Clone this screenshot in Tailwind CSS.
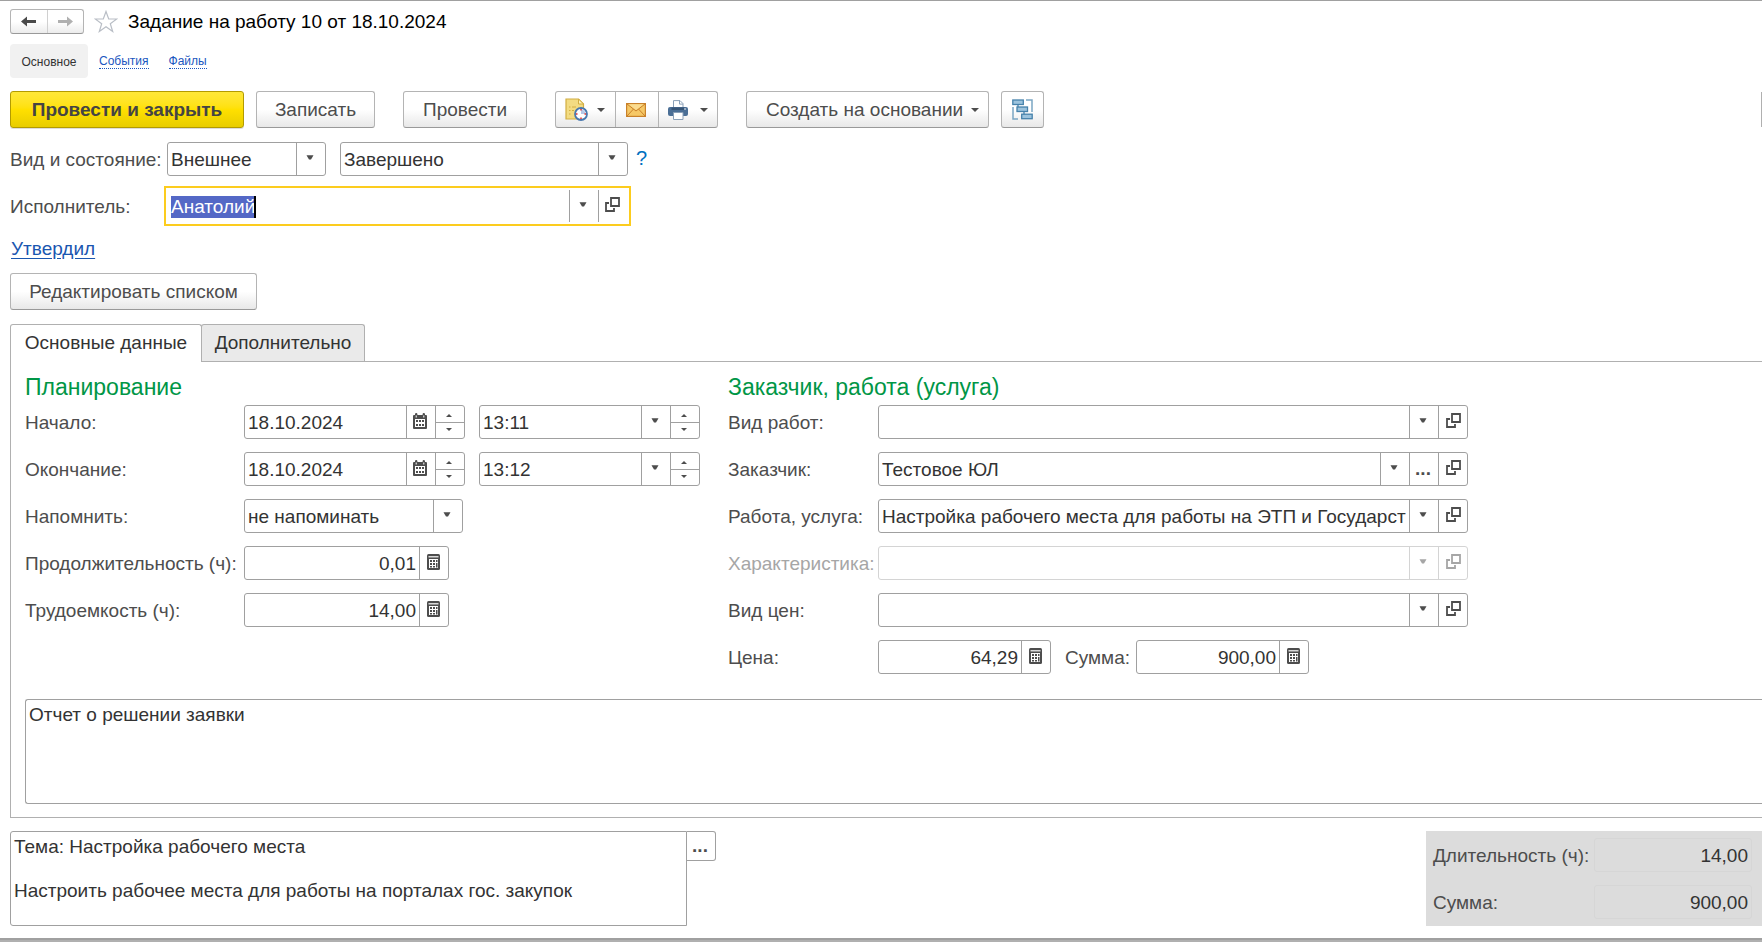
<!DOCTYPE html>
<html lang="ru">
<head>
<meta charset="utf-8">
<meta name="viewport" content="width=device-width, initial-scale=1">
<title>Задание на работу 10 от 18.10.2024</title>
<script src="https://cdn.jsdelivr.net/npm/@tailwindcss/browser@4"></script>
</head>
<body class="bg-white font-['Liberation_Sans',Arial,sans-serif] text-[19px] leading-[22px] text-[#4d4d4d] overflow-x-hidden">

<svg class="hidden" aria-hidden="true">
  <symbol id="i-down" viewBox="0 0 8 5"><path d="M0.500 0.300h7L5 4.600H3z" fill="currentColor"/></symbol>
  <symbol id="i-menu" viewBox="0 0 8 4"><path d="M0 0h8L4 4z" fill="currentColor"/></symbol>
  <symbol id="i-open" viewBox="0 0 15 15"><path d="M6 1h8v8H6z" fill="none" stroke="currentColor" stroke-width="1.800"/><path d="M4 6H1v8h8v-3" fill="none" stroke="currentColor" stroke-width="1.800"/></symbol>
  <symbol id="i-cal" viewBox="0 0 14 16"><path fill="currentColor" fill-rule="evenodd" d="M1 2h1V1.200a1 1 0 0 1 2.400 0V2h5.200V1.200a1 1 0 0 1 2.400 0V2h1a1 1 0 0 1 1 1v12a1 1 0 0 1-1 1H1a1 1 0 0 1-1-1V3a1 1 0 0 1 1-1zM2 6v8h10V6z"/><path fill="currentColor" d="M3 7h2v2H3zM6 7h2v2H6zM9 7h2v2H9zM3 11h2v2H3zM6 11h2v2H6zM9 11h2v2H9z"/><path fill="#fff" d="M2.700 2.500h1v2h-1zM10.300 2.500h1v2h-1z"/></symbol>
  <symbol id="i-calc" viewBox="0 0 13 16"><rect width="13" height="16" rx="1.500" fill="currentColor"/><path fill="#d8d8d8" d="M1.500 2h10v1.500h-10z"/><path fill="#fff" d="M2 5h9v9H2z"/><path fill="currentColor" d="M3 6h2v2H3zM6 6h2v2H6zM9 6h1.500v2H9zM3 9h2v2H3zM6 9h2v2H6zM3 12h2v1.500H3zM6 12h2v1.500H6zM9 9h1.500v4.500H9z"/></symbol>
</svg>

<main class="border-t border-[#a0a0a0] pt-2">
  <header class="flex h-[25px] items-center pl-[10px]">
    <div class="flex h-[25px] w-[74px] rounded-[3px] border border-[#b4b4b4] border-b-[#999] bg-linear-to-b from-white from-50% to-[#ececec]">
      <button class="flex flex-1 items-center justify-center border-r border-[#d0d0d0]" aria-label="Назад"><svg class="h-[11px] w-[15px] text-[#4a4a4a]" viewBox="0 0 15 11"><path d="M0 5.500 6 0.500v3.600h9v2.800H6v3.600z" fill="currentColor"/></svg></button>
      <button class="flex flex-1 items-center justify-center" aria-label="Вперед"><svg class="h-[11px] w-[15px] text-[#b0b0b0]" viewBox="0 0 15 11"><path d="M15 5.500 9 0.500v3.600H0v2.800h9v3.600z" fill="currentColor"/></svg></button>
    </div>
    <button class="ml-[10px]" aria-label="В избранное"><svg class="h-[23px] w-[24px]" viewBox="0 0 24 23"><path d="M12 1.500 14.700 9H22.800L16.300 13.700 18.700 21.500 12 16.800 5.300 21.500 7.700 13.700 1.200 9H9.300z" fill="#fff" stroke="#b9bec6" stroke-width="1.200"/></svg></button>
    <h1 class="ml-[10px] text-[19px] text-black">Задание на работу 10 от 18.10.2024</h1>
  </header>

  <nav class="mt-[10px] flex h-[34px] items-center gap-5 pl-[10px] text-[12px]">
    <span class="flex h-full w-[78px] items-center justify-center rounded-[4px] bg-[#f1f1f1] pt-px text-[#333]">Основное</span>
    <a href="#events" class="-ml-[9px] mt-px border-b border-dotted border-[#1a56c0] leading-[13px] text-[#1a56c0]">События</a>
    <a href="#files" class="mt-px border-b border-dotted border-[#1a56c0] leading-[13px] text-[#1a56c0]">Файлы</a>
  </nav>

  <div class="mt-[13px] flex h-[37px] items-stretch justify-between pl-[10px]">
    <div class="flex">
      <button class="w-[234px] rounded-[3px] border border-[#b39b00] bg-linear-to-b from-[#ffe838] via-[#ffe000] to-[#e8cd00] font-bold text-[#444] shadow-[0_1px_0_#ddd]">Провести и закрыть</button>
      <button class="ml-3 w-[119px] rounded-[3px] border border-[#b4b4b4] border-b-[#999] bg-linear-to-b from-white from-50% to-[#e8e8e8]">Записать</button>
      <button class="ml-7 w-[124px] rounded-[3px] border border-[#b4b4b4] border-b-[#999] bg-linear-to-b from-white from-50% to-[#e8e8e8]">Провести</button>
      <div class="ml-7 flex rounded-[3px] border border-[#b4b4b4] border-b-[#999] bg-linear-to-b from-white from-50% to-[#e8e8e8]">
        <button class="flex w-[60px] items-center gap-[9px] border-r border-[#b4b4b4] pl-[9px]" aria-label="Отложенные действия">
          <svg class="h-[23px] w-[23px]" viewBox="0 0 23 23"><path d="M1 1h12.500l5 5V21H1z" fill="#f3dc82" stroke="#d2ae42" stroke-width="1.200"/><path d="M13.500 1v5h5z" fill="#fff3b8" stroke="#d2ae42"/><path d="M4 9h1.500M7 9h4M4 12.500h1.500M7 12.500h2M4 16h1.500" stroke="#d2ae42"/><circle cx="16" cy="16" r="6" fill="#fff" stroke="#4878ae" stroke-width="1.800"/><path d="M16 16V11.500A4.500 4.500 0 0 1 20.500 16z" fill="#b5c8e8"/><path d="M16 11v1.500M16 19.500V21M11 16h1.500M19.500 16H21" stroke="#e03030" stroke-width="1.500"/></svg>
          <svg class="h-1 w-2"><use href="#i-menu"/></svg>
        </button>
        <button class="flex w-[43px] items-center justify-center border-r border-[#b4b4b4] pr-[2px]" aria-label="Отправить по почте">
          <svg class="h-[14px] w-[20px]" viewBox="0 0 20 14"><rect x=".6" y=".6" width="18.800" height="12.800" fill="#f6c866" stroke="#c9812a" stroke-width="1.200"/><path d="M1 1l9 7 9-7M1 13l6.500-7M19 13l-6.500-7" fill="none" stroke="#c9812a"/><path d="M2.500 1.200h15L10 7z" fill="#fbdc90"/></svg>
        </button>
        <button class="flex w-[58px] items-center gap-3 pl-[9px]" aria-label="Печать">
          <svg class="h-[20px] w-[20px]" viewBox="0 0 20 20"><path d="M5.500 8V.6H12L15 3.600V8" fill="#fff" stroke="#8aa0b8"/><path d="M11.500.6v3.500H15" fill="none" stroke="#8aa0b8"/><rect y="7" width="20" height="9" rx="2" fill="#4b6f96"/><path d="M3.500 7.500h13V10h-13z" fill="#365576"/><circle cx="17" cy="9" r=".8" fill="#fff"/><path d="M5.500 12.500h9.500v7H5.500z" fill="#fff" stroke="#8aa0b8"/></svg>
          <svg class="h-1 w-2"><use href="#i-menu"/></svg>
        </button>
      </div>
      <button class="ml-7 flex w-[243px] items-center gap-2 rounded-[3px] border border-[#b4b4b4] border-b-[#999] bg-linear-to-b from-white from-50% to-[#e8e8e8] pl-[19px] whitespace-nowrap">Создать на основании<svg class="h-1 w-2"><use href="#i-menu"/></svg></button>
      <button class="ml-3 flex w-[43px] items-center justify-center rounded-[3px] border border-[#b4b4b4] border-b-[#999] bg-linear-to-b from-white from-50% to-[#e8e8e8]" aria-label="Связанные документы">
        <svg class="h-[21px] w-[21px]" viewBox="0 0 21 21" fill="#9cc3dd" stroke="#4682ab" stroke-width="1.300"><path d="M14 1h6v12M1 8v12h5" fill="none" stroke="#7ba6c4" stroke-width="1.500"/><path d="M6 5v5h2M12 13v5" fill="none"/><rect x=".8" y="1" width="10.500" height="4.500"/><rect x="5" y="8" width="10.500" height="4.500"/><rect x="9.700" y="15.200" width="10.500" height="4.500"/></svg>
      </button>
    </div>
    <button class="my-px w-px bg-[#b0b0b0]" aria-label="Еще"></button>
  </div>

  <div class="mt-[14px] flex items-center pl-[10px]">
    <label for="kind" class="w-[157px] pt-[2px] whitespace-nowrap">Вид и состояние:</label>
    <div class="grid h-[34px] w-[159px] grid-cols-[1fr_29px] rounded-[3px] border border-[#a0a0a0]">
      <select id="kind" class="col-span-2 col-start-1 row-start-1 appearance-none px-[3px] pt-px text-[#333] outline-none"><option>Внешнее</option></select>
      <span class="pointer-events-none col-start-2 row-start-1 flex items-center justify-center border-l border-[#a0a0a0] pr-[2px] pb-[3px]"><svg class="h-[5px] w-2"><use href="#i-down"/></svg></span>
    </div>
    <div class="ml-[14px] grid h-[34px] w-[288px] grid-cols-[1fr_29px] rounded-[3px] border border-[#a0a0a0]">
      <select aria-label="Состояние" class="col-span-2 col-start-1 row-start-1 appearance-none px-[3px] pt-px text-[#333] outline-none"><option>Завершено</option></select>
      <span class="pointer-events-none col-start-2 row-start-1 flex items-center justify-center border-l border-[#a0a0a0] pr-[2px] pb-[3px]"><svg class="h-[5px] w-2"><use href="#i-down"/></svg></span>
    </div>
    <button class="ml-2 pb-[2px] text-[20px] text-[#0070c0]" aria-label="Справка">?</button>
  </div>

  <div class="mt-[10px] flex items-center pl-[10px]">
    <label for="executor" class="w-[154px] pt-[2px]">Исполнитель:</label>
    <div class="relative flex h-10 w-[467px] border-2 border-[#fccc1e] py-[2px]">
      <input id="executor" value="Анатолий" class="min-w-0 flex-1 px-[5px] pt-px text-[#333] outline-none selection:bg-[#5468c6] selection:text-white">
      <span class="absolute top-[8px] left-[88px] h-[22px] w-[2px] bg-black"></span>
      <button class="flex w-[29px] items-center justify-center border-l border-[#a0a0a0] pr-[2px] pb-[3px]" aria-label="Выбрать"><svg class="h-[5px] w-2"><use href="#i-down"/></svg></button>
      <button class="flex w-[31px] items-center justify-center border-l border-[#a0a0a0] pr-[3px] pb-[3px]" aria-label="Открыть"><svg class="h-[15px] w-[15px]"><use href="#i-open"/></svg></button>
    </div>
  </div>

  <div class="mt-3 pl-[11px]"><a href="#approved" class="text-[#1a56b0] underline underline-offset-[3px]">Утвердил</a></div>

  <div class="mt-[13px] pl-[10px]"><button class="h-[37px] w-[247px] rounded-[3px] border border-[#b4b4b4] border-b-[#999] bg-linear-to-b from-white from-50% to-[#e8e8e8]">Редактировать списком</button></div>

  <div role="tablist" class="mt-[14px] flex h-[37px] pl-[10px] text-[#333]">
    <button role="tab" aria-selected="true" class="z-10 -mb-px w-[192px] rounded-t-[3px] border border-b-0 border-[#b0b0b0] bg-white pb-[2px]">Основные данные</button>
    <button role="tab" aria-selected="false" class="-ml-px w-[164px] rounded-t-[3px] border border-b-0 border-[#b0b0b0] bg-[#eaeaea]">Дополнительно</button>
  </div>

  <section class="ml-[10px] border-y border-l border-[#b0b0b0] pt-[13px] pb-[13px] pl-[14px]">
    <div class="flex items-start">
      <div class="w-[703px] shrink-0 text-[#333]">
        <h2 class="mb-[6px] text-[23px] leading-6 text-[#009646]">Планирование</h2>
        <div class="grid auto-rows-[34px] grid-cols-[219px_1fr] items-center gap-y-[13px]">
          <label for="d1" class="pt-[2px] text-[#4d4d4d]">Начало:</label>
          <div class="flex gap-[14px]">
            <div class="flex h-[34px] w-[221px] rounded-[3px] border border-[#a0a0a0]">
              <input id="d1" value="18.10.2024" class="min-w-0 flex-1 px-[3px] pt-px outline-none">
              <button class="flex w-[29px] items-center justify-center border-l border-[#a0a0a0] pr-[2px] pb-[3px] text-[#4d4d4d]" aria-label="Календарь"><svg class="h-4 w-[14px]"><use href="#i-cal"/></svg></button>
              <span class="flex w-[29px] flex-col border-l border-[#a0a0a0] text-[#4d4d4d]"><button class="flex flex-1 items-center justify-center pt-[3px] pr-[2px]" aria-label="Больше"><svg class="h-[3px] w-[6px] rotate-180"><use href="#i-menu"/></svg></button><button class="flex flex-1 items-center justify-center border-t border-[#a0a0a0] pr-[2px] pb-[2px]" aria-label="Меньше"><svg class="h-[3px] w-[6px]"><use href="#i-menu"/></svg></button></span>
            </div>
            <div class="flex h-[34px] w-[221px] rounded-[3px] border border-[#a0a0a0]">
              <input aria-label="Время начала" value="13:11" class="min-w-0 flex-1 px-[3px] pt-px outline-none">
              <button class="flex w-[29px] items-center justify-center border-l border-[#a0a0a0] pr-[2px] pb-[3px] text-[#4d4d4d]" aria-label="Выбрать"><svg class="h-[5px] w-2"><use href="#i-down"/></svg></button>
              <span class="flex w-[29px] flex-col border-l border-[#a0a0a0] text-[#4d4d4d]"><button class="flex flex-1 items-center justify-center pt-[3px] pr-[2px]" aria-label="Больше"><svg class="h-[3px] w-[6px] rotate-180"><use href="#i-menu"/></svg></button><button class="flex flex-1 items-center justify-center border-t border-[#a0a0a0] pr-[2px] pb-[2px]" aria-label="Меньше"><svg class="h-[3px] w-[6px]"><use href="#i-menu"/></svg></button></span>
            </div>
          </div>
          <label for="d2" class="pt-[2px] text-[#4d4d4d]">Окончание:</label>
          <div class="flex gap-[14px]">
            <div class="flex h-[34px] w-[221px] rounded-[3px] border border-[#a0a0a0]">
              <input id="d2" value="18.10.2024" class="min-w-0 flex-1 px-[3px] pt-px outline-none">
              <button class="flex w-[29px] items-center justify-center border-l border-[#a0a0a0] pr-[2px] pb-[3px] text-[#4d4d4d]" aria-label="Календарь"><svg class="h-4 w-[14px]"><use href="#i-cal"/></svg></button>
              <span class="flex w-[29px] flex-col border-l border-[#a0a0a0] text-[#4d4d4d]"><button class="flex flex-1 items-center justify-center pt-[3px] pr-[2px]" aria-label="Больше"><svg class="h-[3px] w-[6px] rotate-180"><use href="#i-menu"/></svg></button><button class="flex flex-1 items-center justify-center border-t border-[#a0a0a0] pr-[2px] pb-[2px]" aria-label="Меньше"><svg class="h-[3px] w-[6px]"><use href="#i-menu"/></svg></button></span>
            </div>
            <div class="flex h-[34px] w-[221px] rounded-[3px] border border-[#a0a0a0]">
              <input aria-label="Время окончания" value="13:12" class="min-w-0 flex-1 px-[3px] pt-px outline-none">
              <button class="flex w-[29px] items-center justify-center border-l border-[#a0a0a0] pr-[2px] pb-[3px] text-[#4d4d4d]" aria-label="Выбрать"><svg class="h-[5px] w-2"><use href="#i-down"/></svg></button>
              <span class="flex w-[29px] flex-col border-l border-[#a0a0a0] text-[#4d4d4d]"><button class="flex flex-1 items-center justify-center pt-[3px] pr-[2px]" aria-label="Больше"><svg class="h-[3px] w-[6px] rotate-180"><use href="#i-menu"/></svg></button><button class="flex flex-1 items-center justify-center border-t border-[#a0a0a0] pr-[2px] pb-[2px]" aria-label="Меньше"><svg class="h-[3px] w-[6px]"><use href="#i-menu"/></svg></button></span>
            </div>
          </div>
          <label for="remind" class="pt-[2px] text-[#4d4d4d]">Напомнить:</label>
          <div class="grid h-[34px] w-[219px] grid-cols-[1fr_29px] rounded-[3px] border border-[#a0a0a0]">
            <select id="remind" class="col-span-2 col-start-1 row-start-1 appearance-none px-[3px] pt-px outline-none"><option>не напоминать</option></select>
            <span class="pointer-events-none col-start-2 row-start-1 flex items-center justify-center border-l border-[#a0a0a0] pr-[2px] pb-[3px] text-[#4d4d4d]"><svg class="h-[5px] w-2"><use href="#i-down"/></svg></span>
          </div>
          <label for="dur" class="pt-[2px] whitespace-nowrap text-[#4d4d4d]">Продолжительность (ч):</label>
          <div class="flex h-[34px] w-[205px] rounded-[3px] border border-[#a0a0a0]">
            <input id="dur" value="0,01" class="min-w-0 flex-1 px-[3px] pt-px text-right outline-none">
            <button class="flex w-[29px] items-center justify-center border-l border-[#a0a0a0] pr-[2px] pb-[3px] text-[#4d4d4d]" aria-label="Калькулятор"><svg class="h-4 w-[13px]"><use href="#i-calc"/></svg></button>
          </div>
          <label for="lab" class="pt-[2px] text-[#4d4d4d]">Трудоемкость (ч):</label>
          <div class="flex h-[34px] w-[205px] rounded-[3px] border border-[#a0a0a0]">
            <input id="lab" value="14,00" class="min-w-0 flex-1 px-[3px] pt-px text-right outline-none">
            <button class="flex w-[29px] items-center justify-center border-l border-[#a0a0a0] pr-[2px] pb-[3px] text-[#4d4d4d]" aria-label="Калькулятор"><svg class="h-4 w-[13px]"><use href="#i-calc"/></svg></button>
          </div>
        </div>
      </div>

      <div class="w-[740px] text-[#333]">
        <h2 class="mb-[6px] text-[23px] leading-6 text-[#009646]">Заказчик, работа (услуга)</h2>
        <div class="grid auto-rows-[34px] grid-cols-[150px_1fr] items-center gap-y-[13px]">
          <label for="wk" class="pt-[2px] text-[#4d4d4d]">Вид работ:</label>
          <div class="flex h-[34px] rounded-[3px] border border-[#a0a0a0]">
            <input id="wk" class="min-w-0 flex-1 px-[3px] pt-px outline-none">
            <button class="flex w-[29px] items-center justify-center border-l border-[#a0a0a0] pr-[2px] pb-[3px] text-[#4d4d4d]" aria-label="Выбрать"><svg class="h-[5px] w-2"><use href="#i-down"/></svg></button>
            <button class="flex w-[29px] items-center justify-center border-l border-[#a0a0a0] pb-[3px] text-[#4d4d4d]" aria-label="Открыть"><svg class="h-[15px] w-[15px]"><use href="#i-open"/></svg></button>
          </div>
          <label for="cust" class="pt-[2px] text-[#4d4d4d]">Заказчик:</label>
          <div class="flex h-[34px] rounded-[3px] border border-[#a0a0a0]">
            <input id="cust" value="Тестовое ЮЛ" class="min-w-0 flex-1 px-[3px] pt-px outline-none">
            <button class="flex w-[29px] items-center justify-center border-l border-[#a0a0a0] pr-[2px] pb-[3px] text-[#4d4d4d]" aria-label="Выбрать"><svg class="h-[5px] w-2"><use href="#i-down"/></svg></button>
            <button class="w-[29px] border-l border-[#a0a0a0] pr-[2px] font-bold text-[#4d4d4d]" aria-label="Показать все">...</button>
            <button class="flex w-[29px] items-center justify-center border-l border-[#a0a0a0] pb-[3px] text-[#4d4d4d]" aria-label="Открыть"><svg class="h-[15px] w-[15px]"><use href="#i-open"/></svg></button>
          </div>
          <label for="svc" class="pt-[2px] text-[#4d4d4d]">Работа, услуга:</label>
          <div class="flex h-[34px] rounded-[3px] border border-[#a0a0a0]">
            <input id="svc" value="Настройка рабочего места для работы на ЭТП и Государственных порталах" class="min-w-0 flex-1 px-[3px] pt-px outline-none">
            <button class="flex w-[29px] items-center justify-center border-l border-[#a0a0a0] pr-[2px] pb-[3px] text-[#4d4d4d]" aria-label="Выбрать"><svg class="h-[5px] w-2"><use href="#i-down"/></svg></button>
            <button class="flex w-[29px] items-center justify-center border-l border-[#a0a0a0] pb-[3px] text-[#4d4d4d]" aria-label="Открыть"><svg class="h-[15px] w-[15px]"><use href="#i-open"/></svg></button>
          </div>
          <label for="feat" class="pt-[2px] whitespace-nowrap text-[#a6a6a6]">Характеристика:</label>
          <div class="flex h-[34px] rounded-[3px] border border-[#d4d4d4]">
            <input id="feat" disabled class="min-w-0 flex-1 px-[3px] pt-px outline-none">
            <button disabled class="flex w-[29px] items-center justify-center border-l border-[#d4d4d4] pr-[2px] pb-[3px] text-[#a6a6a6]" aria-label="Выбрать"><svg class="h-[5px] w-2"><use href="#i-down"/></svg></button>
            <button disabled class="flex w-[29px] items-center justify-center border-l border-[#d4d4d4] pb-[3px] text-[#a6a6a6]" aria-label="Открыть"><svg class="h-[15px] w-[15px]"><use href="#i-open"/></svg></button>
          </div>
          <label for="pt" class="pt-[2px] text-[#4d4d4d]">Вид цен:</label>
          <div class="flex h-[34px] rounded-[3px] border border-[#a0a0a0]">
            <input id="pt" class="min-w-0 flex-1 px-[3px] pt-px outline-none">
            <button class="flex w-[29px] items-center justify-center border-l border-[#a0a0a0] pr-[2px] pb-[3px] text-[#4d4d4d]" aria-label="Выбрать"><svg class="h-[5px] w-2"><use href="#i-down"/></svg></button>
            <button class="flex w-[29px] items-center justify-center border-l border-[#a0a0a0] pb-[3px] text-[#4d4d4d]" aria-label="Открыть"><svg class="h-[15px] w-[15px]"><use href="#i-open"/></svg></button>
          </div>
          <label for="price" class="pt-[2px] text-[#4d4d4d]">Цена:</label>
          <div class="flex items-center">
            <div class="flex h-[34px] w-[173px] rounded-[3px] border border-[#a0a0a0]">
              <input id="price" value="64,29" class="min-w-0 flex-1 px-[3px] pt-px text-right outline-none">
              <button class="flex w-[29px] items-center justify-center border-l border-[#a0a0a0] pr-[2px] pb-[3px] text-[#4d4d4d]" aria-label="Калькулятор"><svg class="h-4 w-[13px]"><use href="#i-calc"/></svg></button>
            </div>
            <label for="sum" class="ml-[14px] w-[71px] pt-[2px] text-[#4d4d4d]">Сумма:</label>
            <div class="flex h-[34px] w-[173px] rounded-[3px] border border-[#a0a0a0]">
              <input id="sum" value="900,00" class="min-w-0 flex-1 px-[3px] pt-px text-right outline-none">
              <button class="flex w-[29px] items-center justify-center border-l border-[#a0a0a0] pr-[2px] pb-[3px] text-[#4d4d4d]" aria-label="Калькулятор"><svg class="h-4 w-[13px]"><use href="#i-calc"/></svg></button>
            </div>
          </div>
        </div>
      </div>
    </div>
    <textarea aria-label="Отчет" class="mt-[25px] block h-[105px] w-full resize-none rounded-l-[3px] border border-r-0 border-[#a0a0a0] px-[3px] py-1 text-[#333] outline-none">Отчет о решении заявки</textarea>
  </section>

  <footer class="mt-[13px] flex items-start justify-between pl-[10px]">
    <div class="flex items-start">
      <textarea aria-label="Описание" class="block h-[95px] w-[677px] resize-none rounded-l-[3px] border border-[#a0a0a0] px-[3px] py-1 text-[#333] outline-none">Тема: Настройка рабочего места

Настроить рабочее места для работы на порталах гос. закупок</textarea>
      <button class="h-[30px] w-[29px] rounded-r-[3px] border border-l-0 border-[#a0a0a0] pr-[2px] font-bold" aria-label="Редактировать описание">...</button>
    </div>
    <div class="grid auto-rows-[34px] grid-cols-[161px_158px] items-center gap-y-[13px] bg-[#dcdcdc] py-[7px] pr-[10px] pl-[7px]">
      <label for="tdur" class="pt-[2px] whitespace-nowrap">Длительность (ч):</label>
      <input id="tdur" readonly value="14,00" class="h-[34px] w-full rounded-[3px] border border-[#d6d6d6] px-[3px] pt-px text-right text-[#333] outline-none">
      <label for="tsum" class="pt-[2px]">Сумма:</label>
      <input id="tsum" readonly value="900,00" class="h-[34px] w-full rounded-[3px] border border-[#d6d6d6] px-[3px] pt-px text-right text-[#333] outline-none">
    </div>
  </footer>
  <div class="mt-3 h-1 border-t-2 border-[#a0a0a0] bg-[#b0b0b0]"></div>
</main>
<script>
  const executor = document.getElementById('executor');
  executor.focus({ preventScroll: true });
  executor.select();
</script>
</body>
</html>
